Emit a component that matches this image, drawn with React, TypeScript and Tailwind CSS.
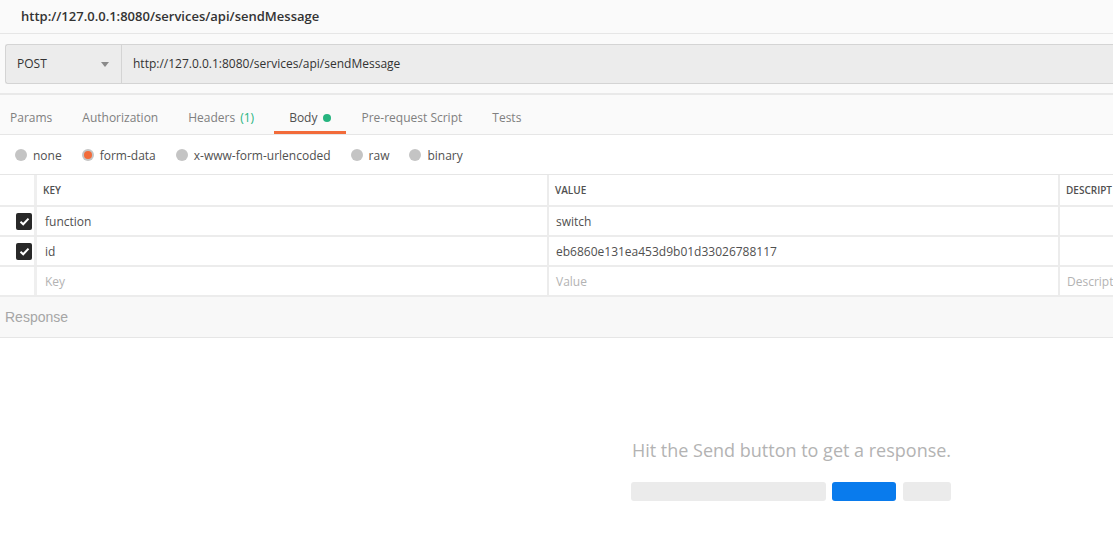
import React from 'react';

const font = { fontFamily: '"Open Sans", "Liberation Sans", sans-serif' };

const tabs = [
  { id: 'params', label: 'Params' },
  { id: 'auth', label: 'Authorization' },
  { id: 'headers', label: 'Headers', count: '(1)' },
  { id: 'body', label: 'Body', active: true },
  { id: 'pre', label: 'Pre-request Script' },
  { id: 'tests', label: 'Tests' },
];

const bodyModes = [
  { id: 'none', label: 'none' },
  { id: 'form-data', label: 'form-data', checked: true },
  { id: 'urlencoded', label: 'x-www-form-urlencoded' },
  { id: 'raw', label: 'raw' },
  { id: 'binary', label: 'binary' },
];

const rows = [
  { key: 'function', value: 'switch' },
  { key: 'id', value: 'eb6860e131ea453d9b01d33026788117' },
];

const Checkbox = () => (
  <div className="w-[16px] h-[17px] rounded-[2px] bg-[#282828] flex items-center justify-center">
    <svg width="11" height="9" viewBox="0 0 11 9">
      <path d="M1.5 4.8 L4.2 7.3 L9.5 1.6" fill="none" stroke="#fff" strokeWidth="2" />
    </svg>
  </div>
);

const Radio = ({ checked }: { checked?: boolean }) => (
  <span className="w-[12px] h-[12px] rounded-full bg-[#c4c4c4] flex items-center justify-center">
    {checked && <span className="w-[8px] h-[8px] rounded-full bg-[#f26b3a]" />}
  </span>
);

const App = () => {
  return (
    <div className="w-[1113px] h-[537px] bg-white text-[#505050] overflow-hidden" style={font}>
      {/* title */}
      <div className="h-[34px] bg-[#fafafa] border-b border-[#e6e6e6] flex items-center pl-[21px]">
        <span className="text-[13px] font-semibold text-[#333]">http://127.0.0.1:8080/services/api/sendMessage</span>
      </div>

      {/* request line */}
      <div className="h-[61px] bg-[#fafafa] border-b-2 border-[#e9e9e9] pt-[10px] pl-[5px]">
        <div className="h-[40px] flex bg-[#ececec] border border-r-0 border-[#d4d4d4] rounded-l-[3px]">
          <div className="w-[116px] flex items-center justify-between pl-[11px] pr-[12px] border-r border-[#d4d4d4]">
            <span className="text-[12px] text-[#333]">POST</span>
            <svg width="8" height="5" viewBox="0 0 8 5">
              <path d="M0 0 H8 L4 5 Z" fill="#8a8a8a" />
            </svg>
          </div>
          <div className="flex-1 flex items-center pl-[11px]">
            <span className="text-[12px] text-[#333]">http://127.0.0.1:8080/services/api/sendMessage</span>
          </div>
        </div>
      </div>

      {/* tabs */}
      <div className="h-[40px] bg-[#fafafa] border-b border-[#e6e6e6] flex -ml-[5px]">
        {tabs.map((t) => (
          <div
            key={t.id}
            className={
              t.active
                ? 'px-[15px] flex items-center gap-[6px] border-b-[3px] border-[#f26b3a] pt-[9px]'
                : 'px-[15px] flex items-center gap-[5px] pt-[6px]'
            }
          >
            <span className={t.active ? 'text-[12px] text-[#505050]' : 'text-[12px] text-[#808080]'}>{t.label}</span>
            {t.count && <span className="text-[12px] text-[#26b47f] pr-[5px]">{t.count}</span>}
            {t.active && <span className="w-[8px] h-[8px] rounded-full bg-[#26b47f]" />}
          </div>
        ))}
      </div>

      {/* body modes */}
      <div className="h-[40px] bg-white border-b border-[#e6e6e6] flex items-center pl-[15px] gap-[20px]">
        {bodyModes.map((m) => (
          <div key={m.id} className="flex items-center gap-[6px] pt-[1px]">
            <Radio checked={m.checked} />
            <span className="text-[12px] text-[#505050] pt-[2px]">{m.label}</span>
          </div>
        ))}
      </div>

      {/* form-data table */}
      <div className="bg-white">
        <div className="h-[32px] flex border-b-2 border-[#ececec]">
          <div className="w-[37px] border-r-[3px] border-[#efefef]" />
          <div className="w-[512px] border-r-2 border-[#ececec] flex items-center pl-[6px] pt-[1px] text-[10px] font-semibold text-[#505050]">KEY</div>
          <div className="w-[511px] border-r-2 border-[#ececec] flex items-center pl-[6px] pt-[1px] text-[10px] font-semibold text-[#505050]">VALUE</div>
          <div className="flex-1 flex items-center pl-[6px] pt-[1px] text-[10px] font-semibold text-[#505050] whitespace-nowrap overflow-hidden">DESCRIPT</div>
        </div>
        {rows.map((r) => (
          <div key={r.key} className="h-[30px] flex border-b-2 border-[#ececec]">
            <div className="w-[37px] border-r-[3px] border-[#efefef] flex items-center pl-[16px] pt-[1px]">
              <Checkbox />
            </div>
            <div className="w-[512px] border-r-2 border-[#ececec] flex items-center pl-[8px] pt-[1px] text-[12px]">{r.key}</div>
            <div className="w-[511px] border-r-2 border-[#ececec] flex items-center pl-[7px] pt-[1px] text-[12px]">{r.value}</div>
            <div className="flex-1" />
          </div>
        ))}
        <div className="h-[30px] flex border-b-2 border-[#ececec]">
          <div className="w-[37px] border-r-[3px] border-[#efefef]" />
          <div className="w-[512px] border-r-2 border-[#ececec] flex items-center pl-[8px] pt-[1px] text-[12px] text-[#b3b3b3]">Key</div>
          <div className="w-[511px] border-r-2 border-[#ececec] flex items-center pl-[7px] pt-[1px] text-[12px] text-[#b3b3b3]">Value</div>
          <div className="flex-1 flex items-center pl-[7px] pt-[1px] text-[12px] text-[#b3b3b3] whitespace-nowrap overflow-hidden">Descript</div>
        </div>
      </div>

      {/* response */}
      <div className="h-[41px] bg-[#f8f8f8] border-b border-[#e6e6e6] flex items-center pl-[5px]">
        <span className="text-[14px] text-[#a6a6a6]" style={{ fontFamily: '"Liberation Sans", Arial, sans-serif' }}>
          Response
        </span>
      </div>

      <div className="flex flex-col items-center ml-[470px] pt-[99px]">
        <div className="text-[18px] text-[#b3b3b3]">Hit the Send button to get a response.</div>
        <div className="flex gap-[6px] mt-[18px] -ml-[2px]">
          <div className="w-[195px] h-[19px] rounded-[3px] bg-[#ebebeb]" />
          <div className="w-[64px] h-[19px] rounded-[3px] bg-[#097bed]" />
          <div className="w-[48px] h-[19px] rounded-[3px] bg-[#ebebeb] ml-[1px]" />
        </div>
      </div>
    </div>
  );
};

export default App;
